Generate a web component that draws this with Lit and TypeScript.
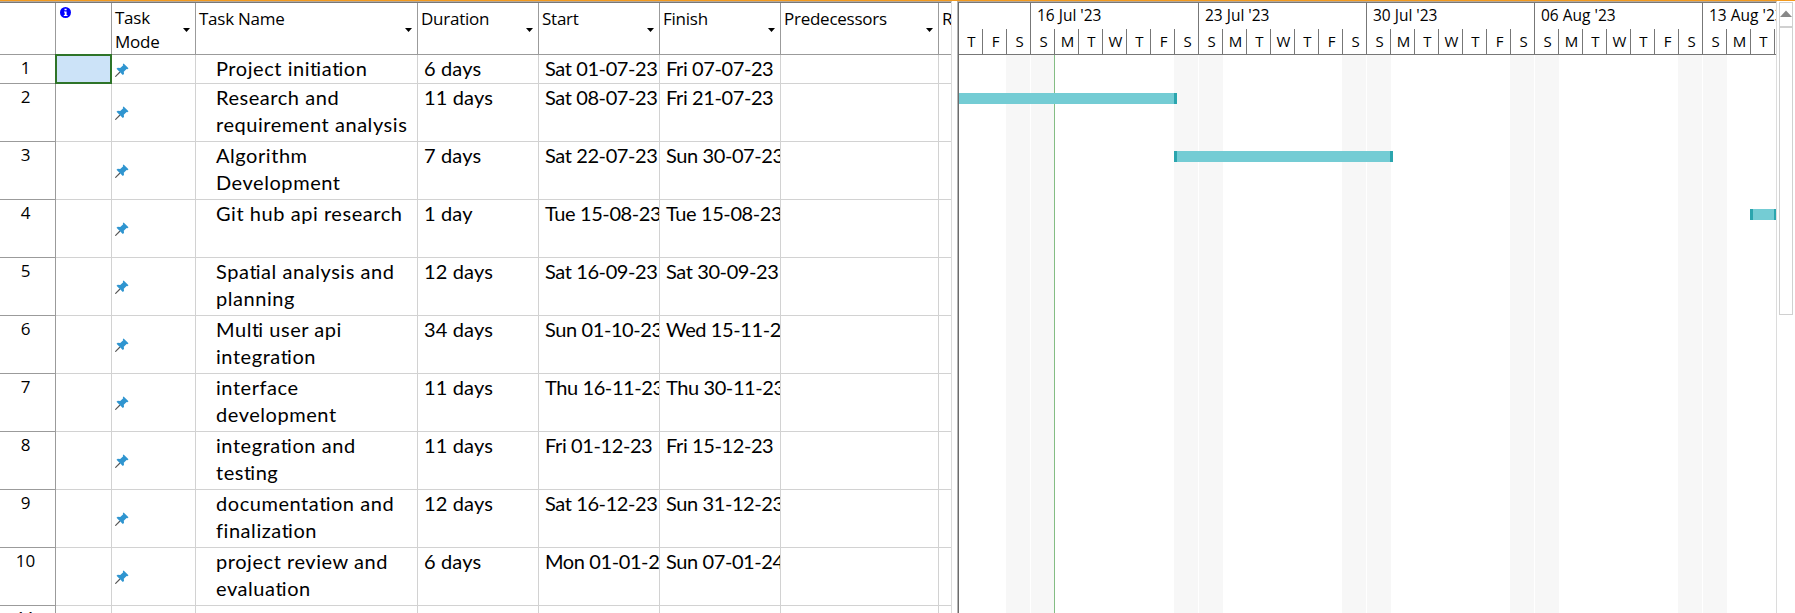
import { LitElement, html, css, svg } from "lit";
import { customElement } from "lit/decorators.js";

type Task = { id: number; name: string[]; dur: string; start: string; finish: string };
const TASKS: Task[] = [
  { id: 1, name: ["Project initiation"], dur: "6 days", start: "Sat 01-07-23", finish: "Fri 07-07-23" },
  { id: 2, name: ["Research and", "requirement analysis"], dur: "11 days", start: "Sat 08-07-23", finish: "Fri 21-07-23" },
  { id: 3, name: ["Algorithm", "Development"], dur: "7 days", start: "Sat 22-07-23", finish: "Sun 30-07-23" },
  { id: 4, name: ["Git hub api research"], dur: "1 day", start: "Tue 15-08-23", finish: "Tue 15-08-23" },
  { id: 5, name: ["Spatial analysis and", "planning"], dur: "12 days", start: "Sat 16-09-23", finish: "Sat 30-09-23" },
  { id: 6, name: ["Multi user api", "integration"], dur: "34 days", start: "Sun 01-10-23", finish: "Wed 15-11-23" },
  { id: 7, name: ["interface", "development"], dur: "11 days", start: "Thu 16-11-23", finish: "Thu 30-11-23" },
  { id: 8, name: ["integration and", "testing"], dur: "11 days", start: "Fri 01-12-23", finish: "Fri 15-12-23" },
  { id: 9, name: ["documentation and", "finalization"], dur: "12 days", start: "Sat 16-12-23", finish: "Sun 31-12-23" },
  { id: 10, name: ["project review and", "evaluation"], dur: "6 days", start: "Mon 01-01-24", finish: "Sun 07-01-24" },
];
const HEADERS = ["Task Name", "Duration", "Start", "Finish", "Predecessors"];
const DAYS = "TFSSMTWTFSSMTWTFSSMTWTFSSMTWTFSSMT".split("");
const WEEKS = ["16 Jul '23", "23 Jul '23", "30 Jul '23", "06 Aug '23", "13 Aug '23"];
// Offsets inside the chart body, at 24px per day.
const BARS = [
  { x: -20, y: 38, w: 238 },
  { x: 215, y: 96, w: 219 },
  { x: 791, y: 154, w: 27 },
];

@customElement("app-root")
export class AppRoot extends LitElement {
  static styles = css`
    :host { display: block; width: 1795px; height: 613px; overflow: hidden; background: #fff; color: #000; font-family: "Open Sans", "Noto Sans", sans-serif; }
    * { box-sizing: border-box; }
    .app { display: grid; grid-template-columns: 952px 5px 820px 18px; grid-template-rows: 612px; height: 613px; border-top: 1px solid #f39a1d; }
    .sheet { border-top: 1px solid #b9aa98; border-right: 1px solid #dcdcdc; overflow: hidden; }
    .row { display: grid; grid-template-columns: 56px 56px 84px 222px 121px 121px 121px 158px 12px; height: 58px; }
    .row.one { height: 29px; }
    .row > div { border-right: 1px solid #d2d2d2; border-bottom: 1px solid #d2d2d2; overflow: hidden; white-space: nowrap; }
    .row > div:last-child { border-right: 0; }
    .row > .num { border-color: #9b9b9b; font-size: 17px; line-height: 24px; padding: 1px 4px 0 0; text-align: center; }
    .row.tail > .num { padding-top: 0; }
    .row.head { height: 53px; border-top: 1px solid #777; }
    .row.head > div { border-color: #9b9b9b; }
    .h { font-size: 17px; letter-spacing: -0.25px; line-height: 24px; padding: 4px 5px 0 3px; display: flex; align-items: flex-start; justify-content: space-between; }
    .caret { width: 7px; height: 4px; margin-top: 21px; flex: none; }
    .row .h.mode { padding-top: 3px; align-items: flex-start; }
    .h.mode .caret { margin-top: 22px; }
    .info { width: 11px; height: 11px; display: block; margin: 4px 0 0 4px; }
    .cell { font-family: "Lato", "Open Sans", sans-serif; font-size: 20px; line-height: 27px; }
    .dur { letter-spacing: 0.15px; padding-left: 6px; }
    .date { letter-spacing: -0.4px; padding-left: 6px; }
    .name { letter-spacing: 0.55px; padding-left: 20px; }
    .tie { letter-spacing: -0.9px; }
    .mode { display: flex; align-items: center; }
    .pin { width: 14px; height: 14px; margin: 1px 0 0 3px; }
    .row > .sel { width: 55px; height: 28px; background: #cce3f8; border: 0; outline: 2px solid #2e7428; outline-offset: -1px; }
    .chart { border-top: 1px solid #b9aa98; border-left: 1px solid #b4b4b4; border-right: 1px solid #dcdcdc; display: flex; overflow: hidden; }
    .plane { border-left: 1px solid #6c6c6c; width: 818px; overflow: hidden; flex: none; display: flex; flex-direction: column; }
    .scale { border-top: 1px solid #777; border-bottom: 1px solid #777; height: 53px; flex: none; display: grid; grid-template-rows: 26px 25px; }
    .weeks, .days { display: flex; }
    .week { flex: none; width: 168px; padding: 1px 0 0 6px; font-size: 15.5px; line-height: 22px; border-left: 1px solid #777; height: 26px; white-space: nowrap; }
    .first { flex: none; width: 71px; }
    .day { flex: none; width: 24px; border-right: 1px solid #777; text-align: center; line-height: 25px; padding-left: 2px; font-size: 15px; }
    .body { flex: 1; position: relative; overflow: hidden; }
    .shades { display: flex; height: 100%; padding-left: 47px; gap: 119px; }
    .shade { width: 49px; flex: none; display: flex; gap: 1px; }
    .shade i { flex: 1; background: #f7f7f7; }
    .today { position: absolute; left: 95px; top: 0; bottom: 0; width: 1px; background: #84bd84; }
    .bar { position: absolute; height: 11px; background: #74ccd4; border: solid #2ba5ae; border-width: 0 3px; }
    .scroll { padding: 1px 2px 0 2px; }
    .up { width: 14px; height: 24px; border: 1px solid #d0d0d0; border-bottom: 0; display: block; }
    .thumb { width: 14px; height: 289px; border: 1px solid #d0d0d0; border-top-width: 2px; }
  `;
  caret = () => svg`<svg class="caret" viewBox="0 0 7 4"><path d="M0 0H7L3.5 4Z"/></svg>`;
  pin = () => svg`<svg class="pin" viewBox="0 0 14 14"><path d="M0.3 13.7L5 9" stroke="#555" stroke-width="1.1"/><path d="M8.6 0.4L13.5 5.2L12.4 6.3L11.6 6L8.8 8.8L9 11L7.8 12L1.5 5.8L2.8 4.8L5.2 5L8.2 2.2L7.8 1.2Z" fill="#2f95d0"/></svg>`;
  // Sets each "ti" pair tight, in the manner of a ligature.
  tied = (s: string) => s.split("ti").map((p, i) => (i ? html`<span class="tie">t</span>i${p}` : p));
  render() {
    return html`<div class="app">
      <div class="sheet">
        <div class="row head">
          <div></div>
          <div><svg class="info" viewBox="0 0 11 11"><circle cx="5.5" cy="5.5" r="5.5" fill="#00f"/><path d="M4.5 1.8H6.6V3.3H4.5ZM4 4.5H6.6V8H7.5V9H3.8V8H4.7V5.4H4Z" fill="#fff"/></svg></div>
          <div class="h mode"><span>Task<br>Mode</span>${this.caret()}</div>
          ${HEADERS.map((t) => html`<div class="h"><span>${t}</span>${this.caret()}</div>`)}
          <div class="h">R</div>
        </div>
        ${TASKS.map((t) => html`<div class="row ${t.id === 1 ? "one" : ""}">
          <div class="num">${t.id}</div>
          <div class=${t.id === 1 ? "sel" : ""}></div>
          <div class="mode">${this.pin()}</div>
          <div class="cell name">${t.name.map((n) => html`<div>${this.tied(n)}</div>`)}</div>
          <div class="cell dur">${t.dur}</div>
          <div class="cell date">${t.start}</div>
          <div class="cell date">${t.finish}</div>
          <div></div><div></div>
        </div>`)}
        <div class="row tail"><div class="num">11</div>${[1, 2, 3, 4, 5, 6, 7, 8].map(() => html`<div></div>`)}</div>
      </div>
      <div></div>
      <div class="chart"><div class="plane">
        <div class="scale">
          <div class="weeks"><span class="first"></span>${WEEKS.map((w) => html`<span class="week">${w}</span>`)}</div>
          <div class="days">${DAYS.map((d) => html`<span class="day">${d}</span>`)}</div>
        </div>
        <div class="body">
          <div class="shades">${WEEKS.map(() => html`<div class="shade"><i></i><i></i></div>`)}</div>
          <div class="today"></div>
          ${BARS.map((b) => html`<div class="bar" style="left:${b.x}px;top:${b.y}px;width:${b.w}px"></div>`)}
        </div>
      </div></div>
      <div class="scroll">
        <svg class="up" viewBox="0 0 12 23"><path d="M0 14H12L6 7.5Z" fill="#888"/></svg>
        <div class="thumb"></div>
      </div>
    </div>`;
  }
}
